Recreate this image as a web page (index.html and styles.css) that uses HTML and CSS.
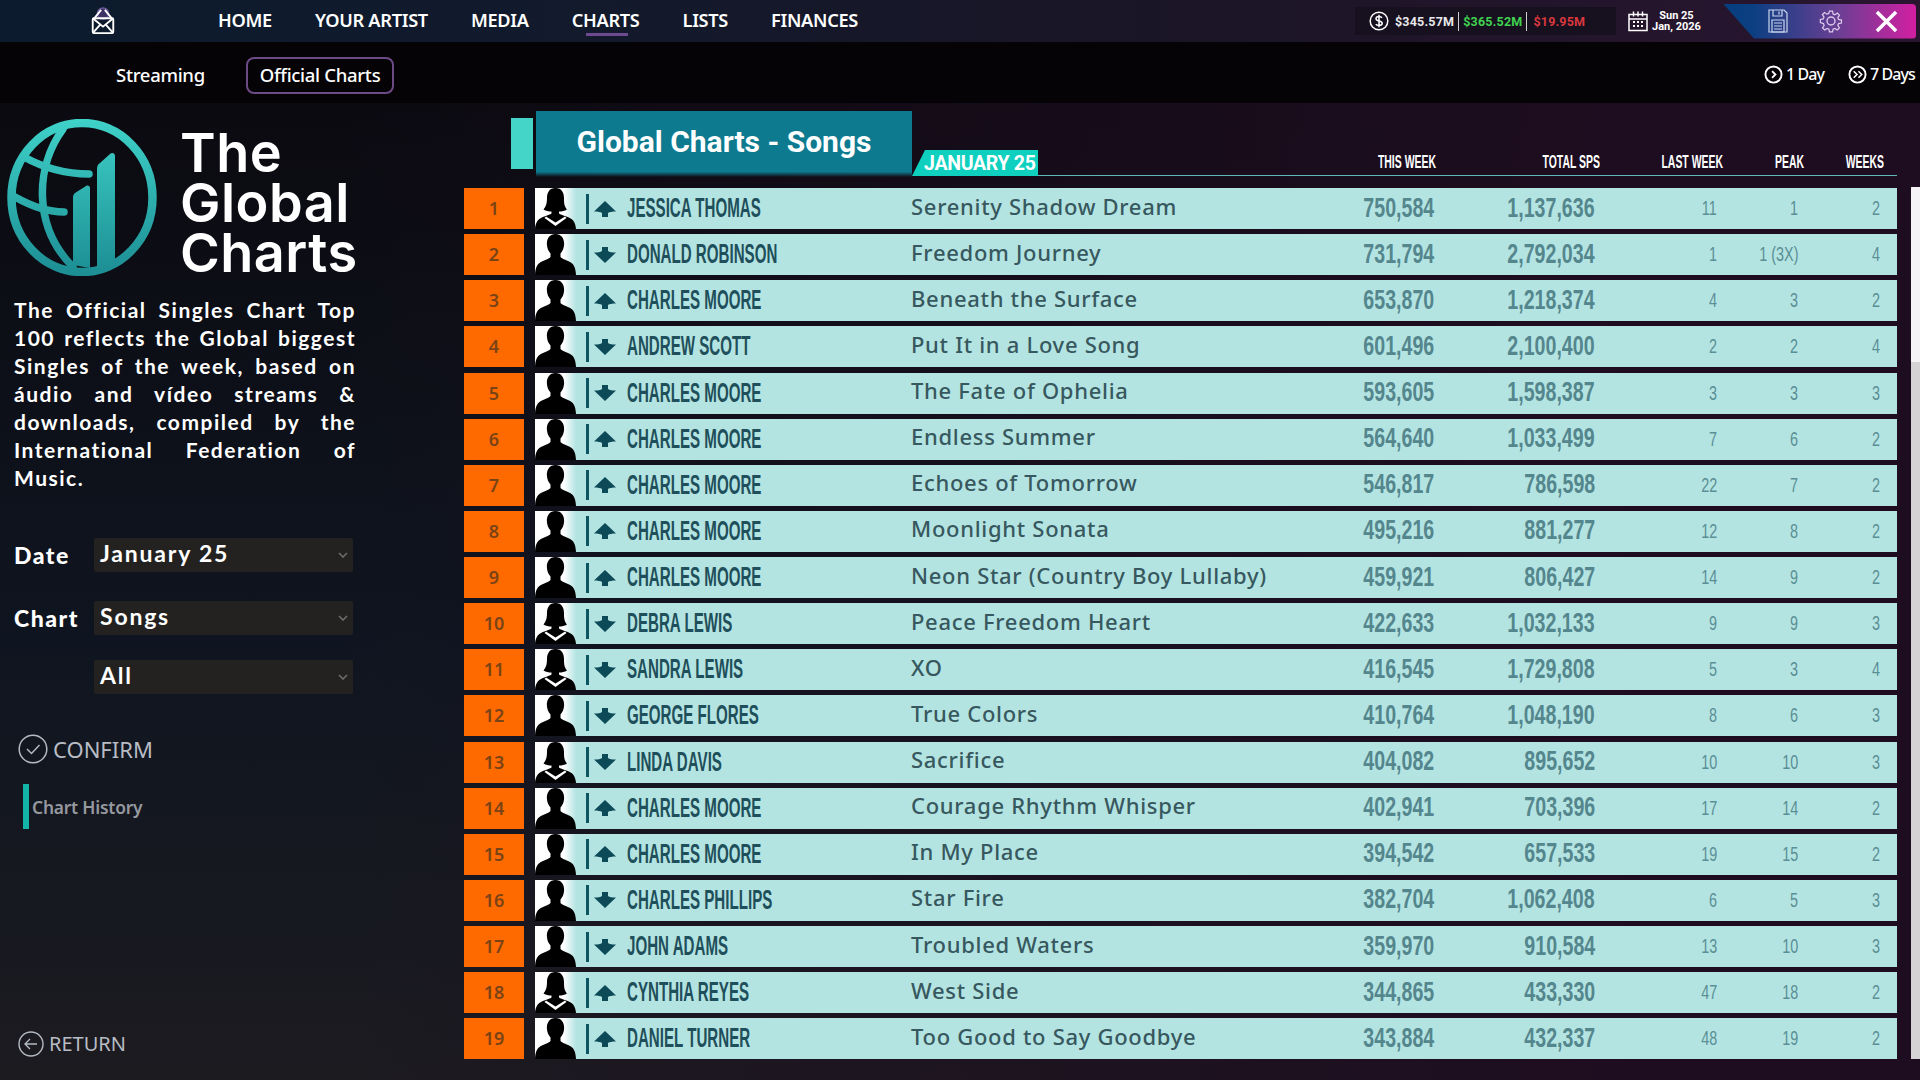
FILE: index.html
```html
<!DOCTYPE html>
<html lang="en">
<head>
    <meta charset="UTF-8">
    <meta name="viewport" content="width=device-width, initial-scale=1.0">
    <title>Global Charts - Songs</title>
    <link rel="stylesheet" href="styles.css">
</head>
<body>
    <svg class="defs" width="0" height="0">
        <symbol id="male" viewBox="0 0 41 41">
            <path d="M20.500 0c-6 0-9 5-8.600 10.500.2 3.500 1.400 6.500 3.600 9v3.500c-1 1.500-4 2.700-8 4.200C3 29 .4 32 0 41h41c-.4-9-3-12-7.500-13.800-4-1.500-7-2.700-8-4.200v-3.500c2.200-2.500 3.400-5.500 3.600-9C29.500 5 26.500 0 20.500 0z"/>
        </symbol>
        <symbol id="female" viewBox="0 0 41 41">
            <path d="M20.500 0c-6.500 0-8.500 5-8.500 10 0 4-.5 8-3.500 11.500 2.500 1.500 5 2 8 2v2c-1.500 1-3.500 1.700-6.500 2.700C4 30 .6 33 0 41h41c-.6-8-4-11-10.500-12.800-3-1-5-1.700-6.500-2.700v-2c3 0 5.500-.5 8-2C29 18 29 14 29 10c0-5-2-10-8.500-10z"/>
            <path class="collar" d="M11 28.500l9.500 6 9.500-6 1.500 1.500-11 8-11-8z"/>
        </symbol>
        <symbol id="arrow-up" viewBox="0 0 22 16">
            <path d="M11 0l11 10.500c-4 0-6.500.5-8 1.500v4H8v-4c-1.500-1-4-1.500-8-1.500z"/>
        </symbol>
        <symbol id="arrow-down" viewBox="0 0 22 16">
            <path d="M11 16L0 5.500c4 0 6.500-.5 8-1.500V0h6v4c1.500 1 4 1.500 8 1.500z"/>
        </symbol>
        <symbol id="chevron" viewBox="0 0 10 6">
            <path d="M1 1l4 4 4-4" fill="none" stroke="currentColor" stroke-width="1.600"/>
        </symbol>
    </svg>

    <header class="topbar">
        <svg class="mail-icon" viewBox="0 0 26 30" fill="none" stroke="#fff" stroke-width="2">
            <circle cx="13" cy="7" r="6" fill="#3c3264" stroke="#6a5a9a" stroke-width="1.500"/>
            <path d="M3 13L11 3M23 13L15 3"/>
            <rect x="2" y="12" width="22" height="16" rx="1.500"/>
            <path d="M2 12l11 9 11-9M2 28l8-9M24 28l-8-9"/>
        </svg>
        <nav class="nav">
            <a>HOME</a>
            <a>YOUR ARTIST</a>
            <a>MEDIA</a>
            <a class="active">CHARTS</a>
            <a>LISTS</a>
            <a>FINANCES</a>
        </nav>
        <div class="money">
            <svg class="money-icon" viewBox="0 0 20 20" fill="none" stroke="#fff" stroke-width="1.500">
                <circle cx="10" cy="10" r="8.800"/>
                <path d="M13 6.800C12.200 5.800 11 5.500 10 5.500c-1.700 0-3 .8-3 2.200 0 3 6.200 1.600 6.200 4.600 0 1.400-1.400 2.200-3.200 2.200-1.200 0-2.500-.4-3.200-1.400M10 3.800v12.400"/>
            </svg>
            <span>$345.57M</span>
            <i></i>
            <span class="green">$365.52M</span>
            <i></i>
            <span class="red">$19.95M</span>
        </div>
        <div class="date-box">
            <svg class="cal-icon" viewBox="0 0 20 21" fill="none" stroke="#fff" stroke-width="1.500">
                <rect x="1" y="4" width="18" height="16"/>
                <path d="M1 8.500h18M5.500 1v5M10 1v5M14.500 1v5"/>
                <path d="M5 11.500h2M9 11.500h2M13 11.500h2M5 15.500h2M9 15.500h2M13 15.500h2" stroke-width="2"/>
            </svg>
            <div class="date-text">Sun 25<br>Jan, 2026</div>
        </div>
        <div class="actions">
            <svg class="save-icon" viewBox="0 0 20 24" fill="none" stroke="#c9d6ee" stroke-width="1.200">
                <path d="M1 1h15l3 3v19H1z"/>
                <path d="M5 1v6h9V1M11 2.500v3M4 11h12v12H4zM6 14h8M6 17h8M6 20h8"/>
            </svg>
            <svg class="gear-icon" viewBox="0 0 24 24" fill="none" stroke="#dcc8ec" stroke-width="1.400">
                <circle cx="12" cy="12" r="4"/>
                <path d="M10.300 1h3.400l.6 3.200 2 .8 2.700-1.800 2.400 2.400-1.800 2.700.8 2 3.200.6v3.400l-3.200.6-.8 2 1.800 2.700-2.400 2.400-2.700-1.800-2 .8-.6 3.200h-3.400l-.6-3.200-2-.8-2.700 1.800-2.400-2.400 1.800-2.700-.8-2L.2 13.700v-3.400l3.200-.6.8-2-1.800-2.700 2.400-2.400 2.700 1.800 2-.8z" transform="translate(1.200 1.200) scale(.9)"/>
            </svg>
            <svg class="close-icon" viewBox="0 0 24 24" fill="none" stroke="#fff" stroke-width="3.600">
                <path d="M2 2l20 20M22 2L2 22"/>
            </svg>
        </div>
    </header>

    <div class="subbar">
        <a class="tab">Streaming</a>
        <a class="tab tab-active">Official Charts</a>
        <div class="advance">
            <svg class="adv-icon" viewBox="0 0 20 20" fill="none" stroke="#fff" stroke-width="2">
                <circle cx="10" cy="10" r="8.500"/>
                <path d="M8.500 6.500L12 10l-3.500 3.500"/>
            </svg>
            <span>1 Day</span>
        </div>
        <div class="advance advance-week">
            <svg class="adv-icon" viewBox="0 0 20 20" fill="none" stroke="#fff" stroke-width="2">
                <circle cx="10" cy="10" r="8.500"/>
                <path d="M6 6.500L9.500 10 6 13.500M11 6.500l3.500 3.500-3.500 3.500" stroke-width="1.600"/>
            </svg>
            <span>7 Days</span>
        </div>
    </div>

    <main class="content">
        <aside class="sidebar">
            <div class="brand">
                <svg class="logo" viewBox="0 0 150 157" fill="none">
                    <defs>
                        <linearGradient id="tealFade" gradientUnits="userSpaceOnUse" x1="0" y1="0" x2="0" y2="157">
                            <stop offset="0" stop-color="#3fd2c9"/>
                            <stop offset="1" stop-color="#1c8d93"/>
                        </linearGradient>
                    </defs>
                    <g stroke="url(#tealFade)" stroke-width="7.500" stroke-linecap="round">
                        <ellipse cx="75" cy="78.500" rx="70.500" ry="74.500" stroke-width="8.500"/>
                        <path d="M56 10C28 48 26 108 66 148"/>
                        <path d="M17 38c20 11 42 17 65 17"/>
                        <path d="M8 78c16 9 32 15 49 15"/>
                    </g>
                    <path d="M90 50c0-3 1-5 3-6l10-9c2-2 5-1 5 2v110l-18 4z" fill="url(#tealFade)"/>
                    <path d="M66 78c0-2 1-3 2-4l11-7c2-1 4 0 4 2v80l-17-3z" fill="url(#tealFade)"/>
                </svg>
                <div class="brand-name">The<br>Global<br>Charts</div>
            </div>
            <p class="intro">The Official Singles Chart Top 100 reflects the Global biggest Singles of the week, based on áudio and vídeo streams &amp; downloads, compiled by the International Federation of Music.</p>
            <div class="field field-date">
                <label>Date</label>
                <div class="select">January 25<svg class="chev"><use href="#chevron"/></svg></div>
            </div>
            <div class="field field-chart">
                <label>Chart</label>
                <div class="select">Songs<svg class="chev"><use href="#chevron"/></svg></div>
            </div>
            <div class="field field-all">
                <label></label>
                <div class="select">All<svg class="chev"><use href="#chevron"/></svg></div>
            </div>
            <div class="confirm">
                <svg class="round-icon" viewBox="0 0 30 30" fill="none" stroke="#b4b9c2" stroke-width="1.500">
                    <circle cx="15" cy="15" r="13.800"/>
                    <path d="M9 15l4.500 4.500L21.500 11"/>
                </svg>
                CONFIRM
            </div>
            <div class="history"><span>Chart History</span></div>
            <div class="return">
                <svg class="return-icon" viewBox="0 0 26 26" fill="none" stroke="#b4b9c2" stroke-width="1.400">
                    <circle cx="13" cy="13" r="12"/>
                    <path d="M19 13H7M12 8l-5 5 5 5"/>
                </svg>
                RETURN
            </div>
        </aside>

        <section class="charts">
            <div class="chart-head">
                <div class="title-mark"></div>
                <h1 class="chart-title">Global Charts - Songs</h1>
                <div class="chart-date">JANUARY 25</div>
                <div class="head-cols">
                    <span>THIS WEEK</span>
                    <span>TOTAL SPS</span>
                    <span>LAST WEEK</span>
                    <span>PEAK</span>
                    <span>WEEKS</span>
                </div>
            </div>
            <div id="rows" class="rows"></div>
        </section>
        <div class="scrollbar"><div class="scroll-thumb"></div></div>
    </main>

    <script>
        // last two: female picture, arrow up
        const songs = [
            ["JESSICA THOMAS", "Serenity Shadow Dream", "750,584", "1,137,636", "11", "1", "2", 1, 1],
            ["DONALD ROBINSON", "Freedom Journey", "731,794", "2,792,034", "1", "1 (3X)", "4", 0, 0],
            ["CHARLES MOORE", "Beneath the Surface", "653,870", "1,218,374", "4", "3", "2", 0, 1],
            ["ANDREW SCOTT", "Put It in a Love Song", "601,496", "2,100,400", "2", "2", "4", 0, 0],
            ["CHARLES MOORE", "The Fate of Ophelia", "593,605", "1,598,387", "3", "3", "3", 0, 0],
            ["CHARLES MOORE", "Endless Summer", "564,640", "1,033,499", "7", "6", "2", 0, 1],
            ["CHARLES MOORE", "Echoes of Tomorrow", "546,817", "786,598", "22", "7", "2", 0, 1],
            ["CHARLES MOORE", "Moonlight Sonata", "495,216", "881,277", "12", "8", "2", 0, 1],
            ["CHARLES MOORE", "Neon Star (Country Boy Lullaby)", "459,921", "806,427", "14", "9", "2", 0, 1],
            ["DEBRA LEWIS", "Peace Freedom Heart", "422,633", "1,032,133", "9", "9", "3", 1, 0],
            ["SANDRA LEWIS", "XO", "416,545", "1,729,808", "5", "3", "4", 1, 0],
            ["GEORGE FLORES", "True Colors", "410,764", "1,048,190", "8", "6", "3", 0, 0],
            ["LINDA DAVIS", "Sacrifice", "404,082", "895,652", "10", "10", "3", 1, 0],
            ["CHARLES MOORE", "Courage Rhythm Whisper", "402,941", "703,396", "17", "14", "2", 0, 1],
            ["CHARLES MOORE", "In My Place", "394,542", "657,533", "19", "15", "2", 0, 1],
            ["CHARLES PHILLIPS", "Star Fire", "382,704", "1,062,408", "6", "5", "3", 0, 0],
            ["JOHN ADAMS", "Troubled Waters", "359,970", "910,584", "13", "10", "3", 0, 0],
            ["CYNTHIA REYES", "West Side", "344,865", "433,330", "47", "18", "2", 1, 1],
            ["DANIEL TURNER", "Too Good to Say Goodbye", "343,884", "432,337", "48", "19", "2", 0, 1],
        ];

        const rows = document.getElementById('rows');

        songs.forEach((s, i) => {
            const row = document.createElement('div');
            row.className = 'row';
            row.innerHTML = `
                <div class="rank">${i + 1}</div>
                <div class="avatar"><svg class="avatar-pic"><use href="#${s[7] ? 'female' : 'male'}"/></svg></div>
                <div class="row-body">
                    <div class="move">
                        <svg class="move-arrow"><use href="#${s[8] ? 'arrow-up' : 'arrow-down'}"/></svg>
                    </div>
                    <div class="artist"><span>${s[0]}</span></div>
                    <div class="song">${s[1]}</div>
                    <div class="big"><span>${s[2]}</span></div>
                    <div class="big"><span>${s[3]}</span></div>
                    <div class="small"><span>${s[4]}</span></div>
                    <div class="small"><span>${s[5]}</span></div>
                    <div class="small"><span>${s[6]}</span></div>
                </div>
            `;
            rows.appendChild(row);
        });
    </script>
</body>
</html>
```

FILE: styles.css
```css
* {
    box-sizing: border-box;
}
html, body {
    height: 100%;
}
body {
    margin: 0;
    width: 1920px;
    height: 1080px;
    overflow: hidden;
    color: #fff;
    font-family: "Noto Sans", sans-serif;
    background: #0f1219;
}
.defs {
    position: absolute;
}

/* top bar */
.topbar {
    height: 42px;
    display: flex;
    align-items: center;
    background: linear-gradient(90deg, #0c1b2e 0%, #121a2c 30%, #1a1526 60%, #2a1530 100%);
}
.topbar > * {
    flex: none;
}
.mail-icon {
    width: 26px;
    height: 28px;
    margin-left: 90px;
}
.nav {
    display: flex;
    margin: -2px 0 0 102px;
    font-size: 18.200px;
    font-weight: 600;
    letter-spacing: -0.3px;
    white-space: nowrap;
}
.nav a {
    position: relative;
    margin-right: 43px;
    line-height: 40px;
}
.nav a:last-child {
    margin-right: 0;
}
.nav a.active::after {
    content: "";
    position: absolute;
    left: 14px;
    right: 12px;
    bottom: 4px;
    height: 3px;
    background: #6d4a8f;
}
.money {
    display: flex;
    align-items: center;
    width: 261px;
    height: 28px;
    margin-left: 497px;
    padding-left: 14px;
    background: #17101f;
    font-family: "Roboto", sans-serif;
    font-size: 12.500px;
    font-weight: 700;
    letter-spacing: 0.2px;
    color: #e8e8ea;
    white-space: nowrap;
}
.money-icon {
    width: 20px;
    height: 20px;
    margin-right: 6px;
    flex: none;
}
.money i {
    width: 1px;
    height: 19px;
    margin: 0 4px;
    background: #cfcfcf;
}
.money .green {
    color: #3fd24f;
}
.money .red {
    color: #d9383e;
    margin-left: 2px;
}
.date-box {
    display: flex;
    align-items: center;
    margin-left: 12px;
}
.cal-icon {
    width: 20px;
    height: 22px;
}
.date-text {
    margin-left: 4px;
    font-family: "Roboto", sans-serif;
    font-size: 11px;
    font-weight: 700;
    line-height: 11px;
    text-align: center;
    white-space: nowrap;
}
.actions {
    display: flex;
    align-items: center;
    width: 193px;
    height: 35px;
    margin-left: auto;
    margin-right: 4px;
    padding-left: 45px;
    background: linear-gradient(90deg, #053f80 0%, #0b3f82 15%, #6b3f93 60%, #d21fa2 100%);
    clip-path: polygon(0 0, 100% 0, 100% 100%, 31px 100%);
    border-radius: 0 4px 4px 0;
}
.save-icon {
    width: 20px;
    height: 24px;
}
.gear-icon {
    width: 24px;
    height: 24px;
    margin-left: 31px;
}
.close-icon {
    width: 23px;
    height: 23px;
    margin-left: 32px;
}

/* sub bar */
.subbar {
    height: 61px;
    display: flex;
    align-items: center;
    padding: 3px 0 0 116px;
    background: #060307;
    font-size: 18.500px;
    font-weight: 500;
    letter-spacing: -0.3px;
}
.tab-active {
    margin: 3px 0 0 41px;
    padding: 0 12px;
    height: 37px;
    line-height: 32px;
    border: 2px solid #6b4a86;
    border-radius: 8px;
}
.advance {
    display: flex;
    align-items: center;
    margin-left: auto;
    font-size: 16px;
    font-weight: 500;
    letter-spacing: -0.9px;
}
.advance-week {
    margin-left: 24px;
    margin-right: 5px;
}
.adv-icon {
    width: 19px;
    height: 19px;
    margin-right: 3px;
}

/* sidebar */
.content {
    display: flex;
    height: 977px;
    background:
        linear-gradient(90deg, rgba(30, 13, 32, 0) 18%, rgba(30, 13, 32, 1) 85%),
        linear-gradient(180deg, #0b0a10 0%, #0f1520 55%, #1c1b20 100%);
}
.sidebar {
    display: flex;
    flex-direction: column;
    width: 464px;
    flex: none;
    padding: 16px 0 0 0;
}
.brand {
    display: flex;
}
.logo {
    width: 150px;
    height: 157px;
    margin-left: 7px;
}
.brand-name {
    margin: 9px 0 0 23px;
    font-family: "Inter", sans-serif;
    font-size: 54px;
    font-weight: 600;
    line-height: 50px;
    letter-spacing: 0.5px;
}
.intro {
    width: 342px;
    margin: 18px 0 0 14px;
    font-family: "Lato", sans-serif;
    font-size: 21px;
    font-weight: 700;
    line-height: 28px;
    letter-spacing: 1.500px;
    text-align: justify;
}
.field {
    display: flex;
    align-items: center;
    margin-left: 14px;
}
.field-date {
    margin-top: 46px;
}
.field-chart {
    margin-top: 29px;
}
.field-all {
    margin-top: 25px;
}
.field label {
    width: 80px;
    font-family: "Lato", sans-serif;
    font-size: 23px;
    font-weight: 900;
    letter-spacing: 1.500px;
}
.select {
    position: relative;
    width: 259px;
    height: 34px;
    padding-left: 6px;
    background: #232221;
    border-radius: 2px;
    font-family: "Lato", sans-serif;
    font-size: 23px;
    font-weight: 700;
    line-height: 31px;
    letter-spacing: 1.800px;
}
.chev {
    position: absolute;
    right: 5px;
    top: 14px;
    width: 10px;
    height: 6px;
    color: #6c6c6c;
}
.confirm {
    display: flex;
    align-items: center;
    margin: 40px 0 0 18px;
    font-size: 22px;
    color: #b8bcc4;
}
.round-icon {
    width: 30px;
    height: 30px;
    margin-right: 5px;
}
.history {
    width: 124px;
    height: 45px;
    margin: 20px 0 0 23px;
    border-left: 6px solid #12b5a8;
    display: flex;
    align-items: center;
    font-size: 17.400px;
    font-weight: 600;
    letter-spacing: -0.2px;
    color: #96999f;
}
.history span {
    margin-left: 3px;
}
.return {
    display: flex;
    align-items: center;
    margin: auto 0 23px 18px;
    font-size: 20px;
    color: #b8bcc4;
}
.return-icon {
    width: 26px;
    height: 26px;
    margin-right: 5px;
}

/* chart */
.charts {
    width: 1433px;
    flex: none;
}
.chart-head {
    display: flex;
    align-items: flex-end;
    height: 85px;
    padding-left: 47px;
}
.title-mark {
    width: 22px;
    height: 51px;
    margin: 0 3px 19px 0;
    background: #45d4c8;
}
.chart-title {
    width: 376px;
    height: 66px;
    margin: 0 0 11px 0;
    background: linear-gradient(180deg, #0e7a90 92%, rgba(14, 122, 144, 0) 100%);
    font-family: "Roboto", sans-serif;
    font-size: 30px;
    font-weight: 700;
    line-height: 62px;
    text-align: center;
}
.chart-date {
    width: 126px;
    height: 26px;
    margin-bottom: 12px;
    padding-left: 12px;
    background: #0fd0bf;
    clip-path: polygon(13px 0, 100% 0, 100% 100%, 0 100%);
    font-family: "Roboto", sans-serif;
    font-size: 19.500px;
    font-weight: 700;
    line-height: 27px;
    letter-spacing: -0.3px;
    white-space: nowrap;
}
.head-cols {
    flex: 1;
    display: grid;
    grid-template-columns: 1fr 164px 123px 81px 80px;
    height: 30px;
    margin-bottom: 12px;
    padding-right: 13px;
    border-bottom: 1px solid #5fb8b8;
    font-family: "Liberation Sans Narrow", "Liberation Sans", sans-serif;
    font-size: 19px;
    font-weight: 700;
    line-height: 31px;
    text-align: right;
}
.head-cols span {
    transform: scaleX(0.55);
    transform-origin: right;
}
.rows {
    display: flex;
    flex-direction: column;
    gap: 5.130px;
}
.row {
    display: flex;
    height: 41px;
}
.rank {
    width: 60px;
    margin-right: 11px;
    background: #ff6a00;
    color: #7a4316;
    font-size: 18px;
    font-weight: 600;
    line-height: 41px;
    text-align: center;
}
.avatar {
    width: 41px;
    background: linear-gradient(90deg, #fff 0%, #fff 70%, #b4e4e2 100%);
}
.avatar-pic {
    display: block;
    width: 41px;
    height: 41px;
    fill: #000;
}
.collar {
    fill: #fff;
}
.row-body {
    flex: 1;
    display: grid;
    grid-template-columns: 51px 284px 419px 104px 161px 122px 81px 82px;
    align-items: center;
    padding-right: 16px;
    background: #b4e4e2;
    color: #2c5860;
}
.move {
    display: flex;
    align-items: center;
    height: 30px;
    margin-left: 10px;
    padding-left: 5px;
    border-left: 3px solid #0d5560;
}
.move-arrow {
    width: 22px;
    height: 16px;
    fill: #0d4a58;
}
.artist {
    font-family: "Liberation Sans Narrow", "Liberation Sans", sans-serif;
    font-size: 27px;
    font-weight: 700;
    color: #1e4f5a;
    white-space: nowrap;
}
.artist span {
    display: inline-block;
    transform: scaleX(0.56);
    transform-origin: left;
}
.song {
    margin-top: -6px;
    font-size: 22px;
    font-weight: 500;
    letter-spacing: 0.7px;
    color: #37585e;
    white-space: nowrap;
}
.big, .small {
    font-family: "Liberation Sans Narrow", "Liberation Sans", sans-serif;
    text-align: right;
    white-space: nowrap;
}
.big span, .small span {
    display: inline-block;
    transform-origin: right;
}
.big {
    margin-top: -2px;
    font-size: 28px;
    font-weight: 700;
    color: #54868d;
}
.big span {
    transform: scaleX(0.7);
}
.small {
    font-size: 20px;
    color: #5a8f95;
}
.small span {
    transform: scaleX(0.72);
}
.scrollbar {
    width: 9px;
    height: 872px;
    margin: 84px 0 0 14px;
    background: #d6d3d4;
}
.scroll-thumb {
    height: 175px;
    background: #f6f3f6;
    border-radius: 2px 0 0 0;
}
```
